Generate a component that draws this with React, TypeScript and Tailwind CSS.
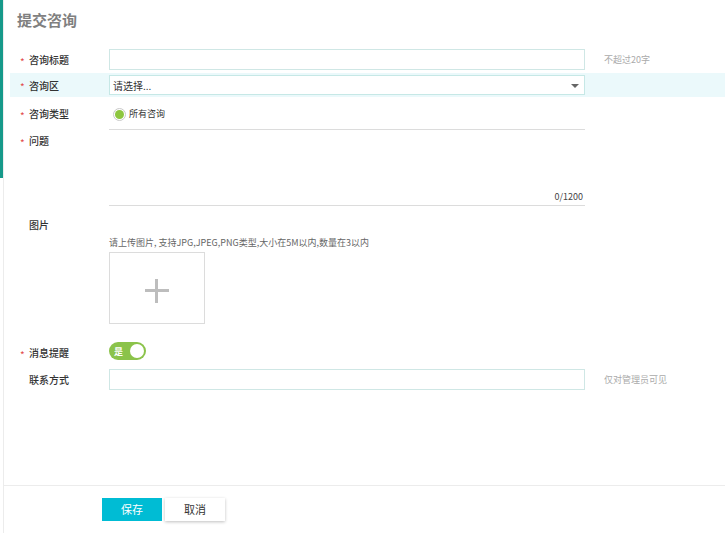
import { useState } from 'react'

const font = { fontFamily: '"Noto Sans CJK SC", "Liberation Sans", sans-serif' }

function Star({ show }: { show?: boolean }) {
  return (
    <span className="w-[9px] pt-[4px] text-[10px] leading-none text-[#e24b4b]">{show ? '*' : ''}</span>
  )
}

function Label({ req, text }: { req?: boolean; text: string }) {
  return (
    <div className="flex w-[89px] shrink-0 items-center">
      <Star show={req} />
      <span className="text-[10px] font-medium text-[#333]">{text}</span>
    </div>
  )
}

export default function App() {
  const [remind, setRemind] = useState(true)

  return (
    <div className="flex h-[533px] w-[725px] overflow-hidden bg-white text-[#333]" style={font}>
      <div className="flex w-[4px] shrink-0 flex-col border-r border-[#ececec]">
        <div className="h-[178px] w-[3px] bg-[#16998a]" />
      </div>

      <div className="flex flex-1 flex-col">
        <div className="flex-1">
          <h1 className="h-[40px] pl-[13px] pt-[8px] text-[15px] font-bold leading-[24px] text-[#808080]">提交咨询</h1>

          <div className="pl-[6px]">
            {/* 咨询标题 */}
            <div className="mt-[9px] flex h-[21px] items-center pl-[10px]">
              <Label req text="咨询标题" />
              <input className="h-[21px] w-[476px] border border-[#cfe7e5] px-2 text-[10px] outline-none" />
              <span className="ml-[19px] text-[9px] text-[#aaa]">不超过20字</span>
            </div>

            {/* 咨询区 */}
            <div className="mt-[3px] flex h-[24px] items-center bg-[#ebf9fb] pl-[10px]">
              <Label req text="咨询区" />
              <div className="flex h-[20px] w-[476px] items-center justify-between border border-[#c6e8e6] bg-white pl-[3px] pr-[5px] pt-[1px]">
                <span className="text-[10px] text-[#333]">请选择...</span>
                <span className="h-0 w-0 border-x-[4px] border-t-[4px] border-x-transparent border-t-[#666]" />
              </div>
            </div>

            {/* 咨询类型 */}
            <div className="flex h-[33px] items-center pl-[10px]">
              <Label req text="咨询类型" />
              <div className="flex h-full w-[476px] items-center border-b border-[#dcdcdc] pt-[2px]">
                <span className="ml-[4px] flex h-[13px] w-[13px] items-center justify-center rounded-full border border-[#c9c9c9]">
                  <span className="h-[9px] w-[9px] rounded-full bg-[#8dc63f]" />
                </span>
                <span className="ml-[3px] text-[9px] text-[#333]">所有咨询</span>
              </div>
            </div>

            {/* 问题 */}
            <div className="flex h-[76px] pl-[10px]">
              <div className="flex h-[20px] items-center pt-[1px]">
                <Label req text="问题" />
              </div>
              <div className="flex w-[476px] items-end justify-end border-b border-[#dcdcdc] pb-[2px] pr-[2px]">
                <span className="text-[9px] text-[#444]">0/1200</span>
              </div>
            </div>

            {/* 图片 */}
            <div className="mt-[9px] flex pl-[10px]">
              <div className="flex h-[18px] items-center">
                <Label text="图片" />
              </div>
            </div>
            <div className="flex pl-[99px]">
              <div>
                <p className="h-[19px] text-[9px] leading-[19px] text-[#666]">请上传图片, 支持JPG,JPEG,PNG类型,大小在5M以内,数量在3以内</p>
                <div className="relative h-[72px] w-[96px] border border-[#dcdcdc]">
                  <span className="absolute left-[35px] top-[36px] h-[3px] w-[24px] bg-[#bdbdbd]" />
                  <span className="absolute left-[45px] top-[26px] h-[24px] w-[3px] bg-[#bdbdbd]" />
                </div>
              </div>
            </div>

            {/* 消息提醒 */}
            <div className="mt-[18px] flex h-[18px] items-center pl-[10px]">
              <div className="flex h-full items-center pt-[3px]">
                <Label req text="消息提醒" />
              </div>
              <button
                onClick={() => setRemind(!remind)}
                className="relative flex h-[18px] w-[37px] items-center rounded-full bg-[#8bc34a]"
              >
                <span className="ml-[5px] text-[9px] font-bold leading-none text-white">是</span>
                <span className="absolute right-[2px] top-[2px] h-[14px] w-[14px] rounded-full bg-white" />
              </button>
            </div>

            {/* 联系方式 */}
            <div className="mt-[9px] flex h-[21px] items-center pl-[10px]">
              <Label text="联系方式" />
              <input className="h-[21px] w-[476px] border border-[#cfe7e5] px-2 text-[10px] outline-none" />
              <span className="ml-[19px] text-[9px] text-[#aaa]">仅对管理员可见</span>
            </div>
          </div>
        </div>

        {/* footer */}
        <div className="h-[48px] border-t border-[#ececec]">
          <div className="mt-[12px] flex gap-[3px] pl-[98px]">
            <button className="h-[23px] w-[60px] bg-[#00bcd4] text-[11px] text-white">保存</button>
            <button className="h-[23px] w-[60px] bg-white text-[11px] text-[#333] shadow-[0_1px_3px_rgba(0,0,0,0.25)]">取消</button>
          </div>
        </div>
      </div>
    </div>
  )
}
